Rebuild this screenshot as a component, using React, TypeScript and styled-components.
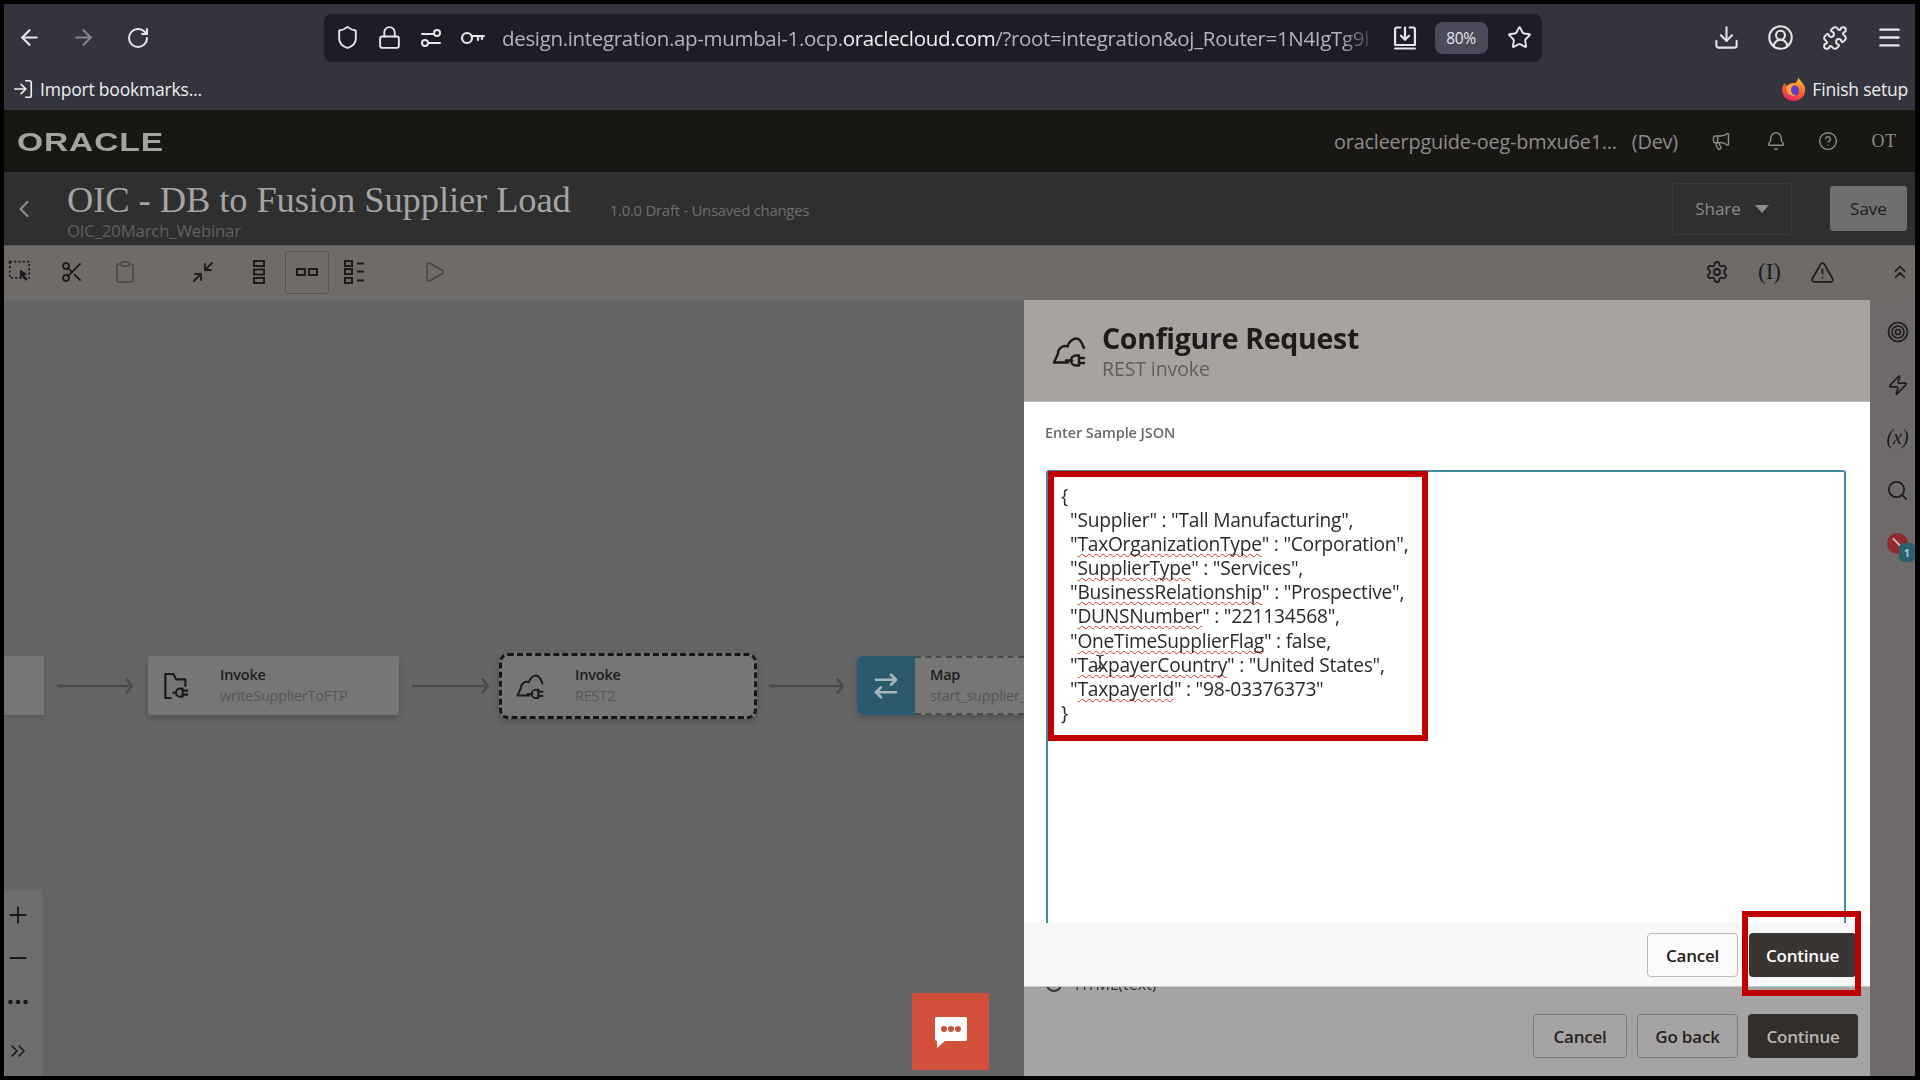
import React from "react";
import styled, { createGlobalStyle } from "styled-components";
import {
  ArrowLeft, ArrowRight, RotateCw, Shield, Lock, Star, Download, CircleUserRound, Puzzle, Menu,
  LogIn, Megaphone, Bell, CircleHelp, Scissors, Clipboard, Minimize2, Play, Settings, TriangleAlert,
  ChevronsUp, ChevronsRight, ChevronLeft, Zap, Search, Plus, Minus, Ellipsis, ArrowRightLeft, TextCursor,
} from "lucide-react";

const Global = createGlobalStyle`
  html, body { margin: 0; padding: 0; background: #000; }
  * { box-sizing: border-box; }
  body { font-family: "Open Sans", "Noto Sans", sans-serif; }
`;

const Screen = styled.div`
  width: 1920px; height: 1080px; background: #000; padding: 4px 5px 4px 4px; overflow: hidden;
`;
const Frame = styled.div`
  width: 1911px; height: 1072px; display: flex; flex-direction: column; filter: blur(0.55px);
`;
const BrowserChrome = styled.div`background: #34343f; color: #e6e6ea; height: 106px;`;
const NavRow = styled.div`height: 62px; padding-left: 3px; display: flex; align-items: center; padding-top: 5px;`;
const Slot = styled.div<{ $w?: number; $ml?: number; $dim?: boolean; $tone?: string }>`
  width: ${p => p.$w ?? 44}px; margin-left: ${p => p.$ml ?? 0}px; flex: none; display: flex;
  align-items: center; justify-content: center; opacity: ${p => (p.$dim ? 0.45 : 1)};
  color: ${p => p.$tone ?? "inherit"};
`;
const UrlBar = styled.div`
  width: 1218px; height: 48px; margin-left: 164px; background: #1d1c28; border-radius: 8px;
  display: flex; align-items: center; padding-left: 2px;
`;
const UrlText = styled.div`
  width: 874px; margin-left: 8px; flex: none; white-space: nowrap; overflow: hidden; font-size: 20.5px; color: #b5b4bc;
  font-family: "Open Sans", sans-serif; letter-spacing: -0.33px;
  -webkit-mask-image: linear-gradient(to right, #000 96%, transparent);
  b { font-weight: 400; color: #f2f2f4; }
`;
const ZoomPill = styled.div`
  width: 53px; height: 32px; margin-left: 0.5px; background: #4b4a58; border-radius: 8px; display: flex; align-items: center;
  justify-content: center; font-size: 15.5px; color: #e6e6ea; letter-spacing: -0.4px;
`;
const RightIcons = styled.div`margin-left: 162px; display: flex; gap: 10.5px;`;
const BookmarkRow = styled.div`
  height: 44px; display: flex; align-items: center; justify-content: space-between; padding: 5px 7px 3px 8px;
`;
const BookmarkLabel = styled.div`display: flex; align-items: center; gap: 6px; font-size: 17.5px; letter-spacing: -0.2px; color: #eeeef0;`;
const OracleBar = styled.div`
  height: 62px; background: #191714; display: flex; align-items: center; padding-left: 13px; color: #8e8c8a;
`;
const OracleLogo = styled.div`
  font-family: "Liberation Sans", sans-serif; font-size: 28px; font-weight: 700; letter-spacing: 0.7px; color: #a5a3a1;
  transform: scaleX(1.2) scaleY(0.95); transform-origin: left center; width: 147px; margin-top: 2px;
`;
const TenantText = styled.div`margin-left: auto; font-size: 19.85px; letter-spacing: -0.2px; white-space: nowrap;`;
const DevText = styled.span`margin-left: 15px;`;
const UserText = styled.div`width: 36px; margin-left: 18px; font-size: 18px; font-family: "Liberation Serif", serif; letter-spacing: 0.5px; text-align: center;`;
const TitleBar = styled.div`
  height: 73px; background: #2f2f30; display: flex; align-items: center; padding-right: 8px;
`;
const TitleStack = styled.div`margin-left: 23px; padding-top: 3px;`;
const Title = styled.div`
  font-family: "Liberation Serif", serif; font-size: 36.5px; line-height: 42px; color: #a4a4a4; white-space: nowrap; letter-spacing: -0.1px;
`;
const SubTitle = styled.div`font-size: 16.8px; line-height: 20px; color: #606060; letter-spacing: -0.2px;`;
const Version = styled.div`margin-left: 39px; margin-top: 3px; font-size: 14.9px; color: #6e6e6e; letter-spacing: -0.25px;`;
const ShareButton = styled.div`
  margin-left: auto; width: 120px; height: 52px; border: 1px solid #3c3c3d; border-radius: 3px; display: flex; align-items: center;
  justify-content: center; gap: 14px; color: #8b8b8b; font-size: 17px;
`;
const ShareCaret = styled.span`
  width: 0; height: 0; border-left: 7px solid transparent; border-right: 7px solid transparent; border-top: 8px solid #8b8b8b;
`;
const SaveButton = styled.div`
  margin-left: 38px; width: 77px; height: 45px; background: #706e6e; border-radius: 3px; display: flex; align-items: center;
  justify-content: center; color: #1d1d1d; font-size: 17px;
`;
const Toolbar = styled.div`
  height: 55px; background: #6f6b69; border-top: 1px solid #5a5858; display: flex; align-items: center; color: #1d1b1b; padding-bottom: 2px;
`;
const SelectedTool = styled(Slot)`
  height: 43px; border: 1px solid #555250; border-radius: 3px;
`;
const Spacer = styled.div`flex: 1;`;
const ToolText = styled.div`font-family: "Liberation Serif", serif; font-size: 23px;`;
const Main = styled.div`flex: 1; display: flex; min-height: 0;`;
const Canvas = styled.div`width: 1020px; flex: none; background: #666565; position: relative; overflow: hidden;`;
const NodeRow = styled.div`display: flex; align-items: center; margin-top: 352px; height: 67px;`;
const StubNode = styled.div`width: 40px; height: 59px; background: #777675; box-shadow: 0 2px 5px rgba(0,0,0,.18); flex: none;`;
const ArrowWrap = styled.div<{ $mr: number; $ml: number }>`
  margin: 0 ${p => p.$mr}px 0 ${p => p.$ml}px; flex: none; display: flex; color: #4e4a49;
`;
const FlowNode = styled.div`
  width: 251px; height: 59px; background: #777675; flex: none; display: flex; align-items: center; padding-left: 12px; gap: 28px;
  box-shadow: 0 3px 6px rgba(0,0,0,.2); border-radius: 2px; color: #1b1b1b;
`;
const SelectedNode = styled(FlowNode)`
  width: 258px; height: 66px; border: 3px dashed #161616; border-radius: 9px; padding-left: 13px; gap: 30px;
`;
const NodeTitle = styled.div`font-size: 14.5px; line-height: 20px; font-weight: 600; color: #1c1c1c; letter-spacing: -0.2px;`;
const NodeSub = styled.div`font-size: 14.5px; line-height: 20px; color: #565656; letter-spacing: -0.2px; white-space: nowrap; margin-top: 1px;`;
const MapNode = styled.div`width: 167px; height: 59px; flex: none; display: flex; box-shadow: 0 3px 6px rgba(0,0,0,.2);`;
const MapIcon = styled.div`
  width: 58px; flex: none; background: #2b5a6e; border-radius: 6px 0 0 6px; display: flex; align-items: center; justify-content: center; color: #a8b6bc;
`;
const MapBody = styled.div`
  flex: 1; min-width: 0; background: #777675; border-top: 2px dashed #4a4a4a; border-bottom: 2px dashed #4a4a4a; padding: 7px 0 0 15px;
`;
const ZoomRail = styled.div`
  position: absolute; left: 0; bottom: 0; width: 38px; height: 186px; background: #6e6e6e; color: #1a1a1a;
  display: flex; flex-direction: column; align-items: center; padding-top: 3px;
`;
const ZoomItem = styled.div`
  height: 43.5px; display: flex; align-items: center; justify-content: center; flex: none; margin-left: -10px;
  &:last-child { margin-top: 6px; }
`;
const ChatButton = styled.div`
  position: absolute; right: 35px; bottom: 6px; width: 77px; height: 77px; background: #d14f3b; display: flex; align-items: center; justify-content: center;
`;
const Panel = styled.div`width: 846px; flex: none; display: flex; flex-direction: column;`;
const PanelHeader = styled.div`
  height: 102px; background: #a6a3a1; display: flex; align-items: center; padding-left: 27px; gap: 15px; border-bottom: 1px solid #bcbab8; flex: none; color: #1d1a19;
`;
const PanelTitle = styled.div`font-size: 28.5px; line-height: 36px; font-weight: 700; color: #1e1b1a; letter-spacing: -0.3px;`;
const PanelSub = styled.div`font-size: 19.5px; line-height: 26px; color: #5f5d5c; letter-spacing: -0.1px;`;
const ModalBody = styled.div`
  flex: none; height: 521px; background: #fff; padding: 21px 24px 0 22px; display: flex; flex-direction: column; overflow: hidden;
`;
const FieldLabel = styled.div`font-size: 14.5px; line-height: 20px; font-weight: 600; color: #6a6a6a; margin-left: -1px; letter-spacing: -0.1px;`;
const JsonBox = styled.div`
  position: relative; margin-top: 27px; flex: 1; border: 2px solid #3f8aa0; border-bottom: none; border-radius: 3px 3px 0 0;
  padding: 12px 0 0 13px; font-size: 19.2px; line-height: 24.1px; color: #2a2a2a; letter-spacing: -0.25px;
`;
const JsonLine = styled.div<{ $indent?: boolean }>`
  white-space: pre; padding-left: ${p => (p.$indent ? 9 : 0)}px; height: 24.1px;
`;
const Squiggle = styled.span`
  text-decoration: underline wavy #d0342c 1px; text-underline-offset: 2px; text-decoration-skip-ink: none;
`;
const Highlight = styled.div`
  position: absolute; border: 6px solid #c00000; pointer-events: none;
`;
const JsonHighlight = styled(Highlight)`left: 0px; top: -1px; width: 380px; height: 270px;`;
const BeamCursor = styled.div`position: absolute; left: 44px; top: 182px; display: flex; color: #222;`;
const ModalFooter = styled.div`
  position: relative; flex: none; height: 64px; background: #f8f8f8; border-bottom: 1px solid #c9c9c9; display: flex; justify-content: flex-end;
  padding: 10px 14px 0 0; gap: 11px;
`;
const ContinueHighlight = styled(Highlight)`right: 9px; top: -12px; width: 119px; height: 85px;`;
const Button = styled.div<{ $w: number; $primary?: boolean; $dim?: boolean }>`
  width: ${p => p.$w}px; height: 44px; border-radius: 4px; display: flex; align-items: center; justify-content: center; font-size: 17px;
  font-weight: 600; letter-spacing: -0.2px;
  background: ${p => (p.$primary ? (p.$dim ? "#322e2c" : "#3a3533") : p.$dim ? "#a5a3a3" : "#fafafa")};
  color: ${p => (p.$primary ? (p.$dim ? "#b9b7b6" : "#fff") : "#26221f")};
  border: ${p => (p.$primary ? "none" : `1px solid ${p.$dim ? "#7c7a7a" : "#bdbbb9"}`)};
`;
const UnderFooter = styled.div`flex: 1; background: #a5a3a3; display: flex; flex-direction: column;`;
const RadioPeek = styled.div`height: 5px; overflow: hidden; padding-left: 22px; flex: none;`;
const RadioInner = styled.div`
  margin-top: -13px; display: flex; align-items: center; gap: 13px; font-size: 16px; line-height: 20px; color: #333;
`;
const RadioDot = styled.div`width: 16px; height: 16px; border: 2px solid #333; border-radius: 50%; flex: none;`;
const UnderButtons = styled.div`display: flex; justify-content: flex-end; gap: 10px; padding-right: 12px; margin-top: 22px;`;
const Rail = styled.div`
  flex: 1; background: #6e6a6a; color: #1c1a1a; display: flex; flex-direction: column; align-items: center; padding-top: 6px;
`;
const RailItem = styled.div`height: 52.7px; flex: none; display: flex; align-items: center; justify-content: center; position: relative; padding-left: 10px;`;
const RailText = styled.div`font-family: "Liberation Serif", serif; font-style: italic; font-size: 20px;`;
const ErrorDot = styled.div`
  width: 21px; height: 21px; border-radius: 50%; background: #8f2a2e; position: relative;
  &::before {
    content: ""; position: absolute; left: 4px; top: 9px; width: 13px; height: 2px; background: #d9b9b6; transform: rotate(45deg);
  }
`;
const Badge = styled.div`
  position: absolute; left: 12px; top: 10px; width: 16px; height: 19px; border-radius: 5px; background: #2a5f6c; color: #a9c9cf; font-size: 11px; font-weight: 700;
  display: flex; align-items: center; justify-content: center;
`;

const CloudPlug = ({ size = 36 }: { size?: number }) => (
  <svg width={size} height={size} viewBox="0 0 36 36" fill="none" stroke="currentColor" strokeWidth="2.4" strokeLinecap="round" strokeLinejoin="round">
    <path d="M17 29.500H3L7 20.500C7 15.500 12 11.500 16.500 13.500C19 6 26 3 29.500 8C31 10 32 12.500 33 15" />
    <path d="M15 27.500h6" />
    <path d="M28 22.500h-3a5 5 0 0 0 0 10h3z" />
    <path d="M28 25h5M28 30h5" />
  </svg>
);
const FolderPlug = () => (
  <svg width="32" height="32" viewBox="0 0 24 24" fill="none" stroke="currentColor" strokeWidth="1.6" strokeLinecap="round" strokeLinejoin="round">
    <path d="M8 21H4V3h6l2 4h7v5" />
    <path d="M17 14h-2a3 3 0 0 0 0 6h2z" />
    <path d="M17 15.500h3.500M17 18.500h3.500M12 17h-2" />
  </svg>
);
const SlidersGlyph = () => (
  <svg width="24" height="24" viewBox="0 0 24 24" fill="none" stroke="currentColor" strokeWidth="2" strokeLinecap="round">
    <path d="M3 8h11M10 17h11" /><circle cx="18" cy="7" r="3" /><circle cx="6" cy="17" r="3" />
  </svg>
);
const KeyGlyph = () => (
  <svg width="26" height="24" viewBox="0 0 26 24" fill="none" stroke="currentColor" strokeWidth="2.2" strokeLinecap="round">
    <circle cx="7" cy="12" r="5" /><path d="M12 10h12M18 10v4M22 10v3" />
  </svg>
);
const SavePage = () => (
  <svg width="28" height="28" viewBox="0 0 24 24" fill="none" stroke="currentColor" strokeWidth="1.9" strokeLinecap="round" strokeLinejoin="round">
    <path d="M8 3H5a1.500 1.500 0 0 0-1.500 1.500V18h17V4.500A1.500 1.500 0 0 0 19 3h-3" />
    <path d="M12 3v10M8.500 10l3.500 3.500 3.500-3.500" /><path d="M3.500 21h17" />
  </svg>
);
const FirefoxMark = () => (
  <svg width="25" height="26" viewBox="0 0 25 26">
    <defs>
      <linearGradient id="ffBody" x1="0.7" y1="0" x2="0.3" y2="1">
        <stop offset="0" stopColor="#ffc62e" />
        <stop offset="0.5" stopColor="#f9642f" />
        <stop offset="1" stopColor="#e0245e" />
      </linearGradient>
    </defs>
    <path d="M17 1c1 3 6 6 7 11 1 7-4 13-11.500 13C6 25 1 20 1 14c0-3 1-5 3-7 0 2 1 3 2 3 2-3 5-3 8-3 2-1 3-3 3-6z" fill="url(#ffBody)" />
    <circle cx="12.500" cy="14.500" r="5.500" fill="#5f3bc9" />
    <path d="M5 11c3-3 7-4 10-2-3 0-5 2-5 5 0 3 2 5 5 5.500-4 1.500-8-1-9.500-4.500z" fill="#ffa436" />
  </svg>
);
const SelectGlyph = () => (
  <svg width="26" height="26" viewBox="0 0 24 24" fill="none" stroke="currentColor" strokeWidth="1.600">
    <rect x="2.500" y="2.500" width="18" height="15" strokeDasharray="2 2" />
    <path d="M12 10l7 4-3 1 3 4-2 1-3-4-2 2z" fill="currentColor" stroke="none" />
  </svg>
);
const StackGlyph = () => (
  <svg width="14" height="24" viewBox="0 0 14 24" fill="none" stroke="currentColor" strokeWidth="2">
    <rect x="2" y="1" width="10" height="5" /><rect x="2" y="9.500" width="10" height="5" /><rect x="2" y="18" width="10" height="5" />
  </svg>
);
const PairGlyph = () => (
  <svg width="24" height="14" viewBox="0 0 24 14" fill="none" stroke="currentColor" strokeWidth="2">
    <rect x="2" y="4" width="8" height="6" /><rect x="14" y="4" width="8" height="6" />
  </svg>
);
const ListGlyph = () => (
  <svg width="24" height="26" viewBox="0 0 24 26" fill="none" stroke="currentColor" strokeWidth="2">
    <rect x="2" y="2" width="7" height="5" /><rect x="2" y="10" width="7" height="5" /><rect x="2" y="19" width="7" height="5" />
    <path d="M14 4.500h7M14 12.500h7M14 21.500h7" />
  </svg>
);
const TargetGlyph = () => (
  <svg width="24" height="24" viewBox="0 0 24 24" fill="none" stroke="currentColor" strokeWidth="1.700">
    <circle cx="12" cy="12" r="9.500" /><circle cx="12" cy="12" r="6" /><circle cx="12" cy="12" r="2.500" />
  </svg>
);
const ChatGlyph = () => (
  <svg width="34" height="32" viewBox="0 0 34 32">
    <path d="M3 1h28a2 2 0 0 1 2 2v20a2 2 0 0 1-2 2H11l-8 7v-7H3a2 2 0 0 1-2-2V3a2 2 0 0 1 2-2z" fill="#fff" />
    <circle cx="10" cy="13" r="3" fill="#c9503c" /><circle cx="17" cy="13" r="3" fill="#c9503c" /><circle cx="24" cy="13" r="3" fill="#c9503c" />
  </svg>
);
const FlowArrow = ({ w }: { w: number }) => (
  <svg width={w} height="18" viewBox={`0 0 ${w} 18`} fill="none" stroke="currentColor" strokeWidth="2.4">
    <path d={`M0 9h${w - 1}M${w - 7} 1.500l6 7.500-6 7.500`} />
  </svg>
);

const json: { pre: string; key?: string; post: string; indent?: boolean }[] = [
  { pre: "{", post: "" },
  { pre: "\"Supplier\" : \"Tall Manufacturing\",", post: "", indent: true },
  { pre: "\"", key: "TaxOrganizationType", post: "\" : \"Corporation\",", indent: true },
  { pre: "\"", key: "SupplierType", post: "\" : \"Services\",", indent: true },
  { pre: "\"", key: "BusinessRelationship", post: "\" : \"Prospective\",", indent: true },
  { pre: "\"", key: "DUNSNumber", post: "\" : \"221134568\",", indent: true },
  { pre: "\"", key: "OneTimeSupplierFlag", post: "\" : false,", indent: true },
  { pre: "\"", key: "TaxpayerCountry", post: "\" : \"United States\",", indent: true },
  { pre: "\"", key: "TaxpayerId", post: "\" : \"98-03376373\"", indent: true },
  { pre: "}", post: "" },
];

export default function App() {
  return (
    <Screen>
      <Global />
      <Frame>
        <BrowserChrome>
          <NavRow>
            <Slot><ArrowLeft size={25} strokeWidth={2} /></Slot>
            <Slot $ml={10} $dim><ArrowRight size={25} strokeWidth={2} /></Slot>
            <Slot $ml={11}><RotateCw size={24} strokeWidth={2} /></Slot>
            <UrlBar>
              <Slot $w={42}><Shield size={25} strokeWidth={1.8} /></Slot>
              <Slot $w={42}><Lock size={25} strokeWidth={1.8} /></Slot>
              <Slot $w={42}><SlidersGlyph /></Slot>
              <Slot $w={42}><KeyGlyph /></Slot>
              <UrlText>design.integration.ap-mumbai-1.ocp.<b>oraclecloud.com</b>/?root=integration&amp;oj_Router=1N4IgTg9l</UrlText>
              <Slot $w={58}><SavePage /></Slot>
              <ZoomPill>80%</ZoomPill>
              <Slot $w={34} $ml={14.5}><Star size={25} strokeWidth={1.8} /></Slot>
            </UrlBar>
            <RightIcons>
              <Slot><Download size={27} strokeWidth={1.8} /></Slot>
              <Slot><CircleUserRound size={27} strokeWidth={1.8} /></Slot>
              <Slot><Puzzle size={26} strokeWidth={1.8} /></Slot>
              <Slot><Menu size={27} strokeWidth={2.2} /></Slot>
            </RightIcons>
          </NavRow>
          <BookmarkRow>
            <BookmarkLabel><LogIn size={22} strokeWidth={1.8} />Import bookmarks...</BookmarkLabel>
            <BookmarkLabel><FirefoxMark />Finish setup</BookmarkLabel>
          </BookmarkRow>
        </BrowserChrome>
        <OracleBar>
          <OracleLogo>ORACLE</OracleLogo>
          <TenantText>oracleerpguide-oeg-bmxu6e1...<DevText>(Dev)</DevText></TenantText>
          <Slot $w={40} $ml={23}><Megaphone size={20} strokeWidth={1.7} /></Slot>
          <Slot $w={40} $ml={15}><Bell size={20} strokeWidth={1.7} /></Slot>
          <Slot $w={40} $ml={12}><CircleHelp size={20} strokeWidth={1.7} /></Slot>
          <UserText>OT</UserText>
          <Slot $w={13} />
        </OracleBar>
        <TitleBar>
          <Slot $w={40} $tone="#8f8f8f"><ChevronLeft size={28} strokeWidth={1.8} /></Slot>
          <TitleStack>
            <Title>OIC - DB to Fusion Supplier Load</Title>
            <SubTitle>OIC_20March_Webinar</SubTitle>
          </TitleStack>
          <Version>1.0.0 Draft - Unsaved changes</Version>
          <ShareButton>Share<ShareCaret /></ShareButton>
          <SaveButton>Save</SaveButton>
        </TitleBar>
        <Toolbar>
          <Slot $w={32}><SelectGlyph /></Slot>
          <Slot $w={40} $ml={16}><Scissors size={24} strokeWidth={1.8} /></Slot>
          <Slot $w={40} $ml={13} $dim><Clipboard size={24} strokeWidth={1.6} /></Slot>
          <Slot $w={40} $ml={38}><Minimize2 size={24} strokeWidth={1.8} /></Slot>
          <Slot $w={40} $ml={16}><StackGlyph /></Slot>
          <SelectedTool $w={44} $ml={6}><PairGlyph /></SelectedTool>
          <Slot $w={40} $ml={6}><ListGlyph /></Slot>
          <Slot $w={40} $ml={39} $dim><Play size={24} strokeWidth={1.6} /></Slot>
          <Spacer />
          <Slot $w={40}><Settings size={24} strokeWidth={1.8} /></Slot>
          <Slot $w={40} $ml={12.5}><ToolText>(I)</ToolText></Slot>
          <Slot $w={40} $ml={12.5}><TriangleAlert size={25} strokeWidth={1.7} /></Slot>
          <Slot $w={30} $ml={43}><ChevronsUp size={22} strokeWidth={1.8} /></Slot>
        </Toolbar>
        <Main>
          <Canvas>
            <NodeRow>
              <StubNode />
              <ArrowWrap $ml={13} $mr={15}><FlowArrow w={76} /></ArrowWrap>
              <FlowNode>
                <FolderPlug />
                <div><NodeTitle>Invoke</NodeTitle><NodeSub>writeSupplierToFTP</NodeSub></div>
              </FlowNode>
              <ArrowWrap $ml={13} $mr={10}><FlowArrow w={77} /></ArrowWrap>
              <SelectedNode>
                <CloudPlug size={30} />
                <div><NodeTitle>Invoke</NodeTitle><NodeSub>REST2</NodeSub></div>
              </SelectedNode>
              <ArrowWrap $ml={12} $mr={13}><FlowArrow w={75} /></ArrowWrap>
              <MapNode>
                <MapIcon><ArrowRightLeft size={30} strokeWidth={2} /></MapIcon>
                <MapBody><NodeTitle>Map</NodeTitle><NodeSub>start_supplier_</NodeSub></MapBody>
              </MapNode>
            </NodeRow>
            <ZoomRail>
              <ZoomItem><Plus size={26} strokeWidth={1.8} /></ZoomItem>
              <ZoomItem><Minus size={26} strokeWidth={2} /></ZoomItem>
              <ZoomItem><Ellipsis size={26} strokeWidth={2.2} /></ZoomItem>
              <ZoomItem><ChevronsRight size={24} strokeWidth={1.6} /></ZoomItem>
            </ZoomRail>
            <ChatButton><ChatGlyph /></ChatButton>
          </Canvas>
          <Panel>
            <PanelHeader>
              <CloudPlug />
              <div>
                <PanelTitle>Configure Request</PanelTitle>
                <PanelSub>REST invoke</PanelSub>
              </div>
            </PanelHeader>
            <ModalBody>
              <FieldLabel>Enter Sample JSON</FieldLabel>
              <JsonBox>
                {json.map((l, i) => (
                  <JsonLine key={i} $indent={l.indent}>
                    {l.pre}{l.key && <Squiggle>{l.key}</Squiggle>}{l.post}
                  </JsonLine>
                ))}
                <JsonHighlight />
                <BeamCursor><TextCursor size={16} strokeWidth={1.6} /></BeamCursor>
              </JsonBox>
            </ModalBody>
            <ModalFooter>
              <Button $w={91}>Cancel</Button>
              <Button $w={107} $primary>Continue</Button>
              <ContinueHighlight />
            </ModalFooter>
            <UnderFooter>
              <RadioPeek><RadioInner><RadioDot />HTML(text)</RadioInner></RadioPeek>
              <UnderButtons>
                <Button $w={94} $dim>Cancel</Button>
                <Button $w={101} $dim>Go back</Button>
                <Button $w={110} $primary $dim>Continue</Button>
              </UnderButtons>
            </UnderFooter>
          </Panel>
          <Rail>
            <RailItem><TargetGlyph /></RailItem>
            <RailItem><Zap size={22} strokeWidth={1.8} /></RailItem>
            <RailItem><RailText>(x)</RailText></RailItem>
            <RailItem><Search size={23} strokeWidth={1.8} /></RailItem>
            <RailItem><ErrorDot><Badge>1</Badge></ErrorDot></RailItem>
          </Rail>
        </Main>
      </Frame>
    </Screen>
  );
}
